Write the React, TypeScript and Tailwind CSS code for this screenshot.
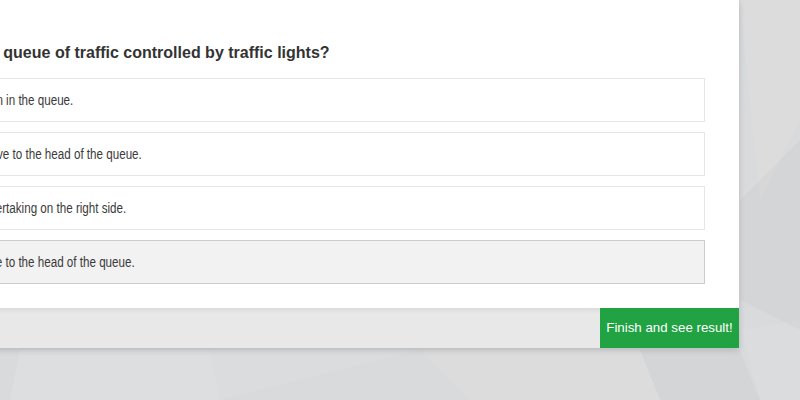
import React, { useState } from "react";

const options = [
  "Just relax and keep your position in the queue.",
  "Use the empty bus lane and move to the head of the queue.",
  "Pull out of this queue to start overtaking on the right side.",
  "Switch to the free lane and move to the head of the queue.",
];

const App = () => {
  const [selected, setSelected] = useState(3);

  return (
    <div className="relative h-[400px] w-[800px] overflow-hidden bg-[#d9dadb] font-['Liberation_Sans',Arial,sans-serif]">
      {/* faint polygon backdrop */}
      <svg className="absolute inset-0 h-full w-full" viewBox="0 0 800 400" preserveAspectRatio="none">
        <polygon points="740,0 800,0 800,120 760,200" fill="#ffffff" opacity="0.08" />
        <polygon points="740,200 800,140 800,330 740,300" fill="#000000" opacity="0.02" />
        <polygon points="20,350 210,350 220,400 10,400" fill="#ffffff" opacity="0.12" />
        <polygon points="210,350 420,350 220,400" fill="#ffffff" opacity="0.06" />
        <polygon points="420,350 640,350 660,400 470,400" fill="#ffffff" opacity="0.08" />
        <polygon points="640,350 740,350 760,400 660,400" fill="#000000" opacity="0.02" />
        <polygon points="740,330 800,320 800,400 760,400" fill="#ffffff" opacity="0.06" />
      </svg>

      {/* Quiz card */}
      <div className="relative ml-[-221px] w-[960px] bg-white shadow-[0_2px_6px_rgba(0,0,0,0.16)]">
        <div className="pl-[35px] pr-[34px] pt-[43px] pb-[24px]">
          <h2 className="mb-[15px] whitespace-nowrap text-[16px] font-bold leading-[20px] text-[#333]">
            What should you do in a queue of traffic controlled by traffic lights?
          </h2>

          <div className="flex flex-col gap-[10px]">
            {options.map((opt, i) => (
              <button
                key={i}
                type="button"
                onClick={() => setSelected(i)}
                className={`h-[44px] w-full border pl-[18px] pr-[15px] text-left text-[14px] text-[#3a3a3a] ${
                  selected === i ? "border-[#cccccc] bg-[#f2f2f2]" : "border-[#e6e6e6] bg-white"
                }`}
              >
                <span className="inline-block origin-left scale-x-[0.83] whitespace-nowrap">{opt}</span>
              </button>
            ))}
          </div>
        </div>

        {/* Footer */}
        <div className="flex h-[40px] justify-end bg-[#e8e8e8] shadow-[inset_0_5px_5px_-3px_rgba(0,0,0,0.07)]">
          <button type="button" className="w-[139px] bg-[#21a243] text-[13.3px] text-white">
            Finish and see result!
          </button>
        </div>
      </div>
    </div>
  );
};

export default App;
